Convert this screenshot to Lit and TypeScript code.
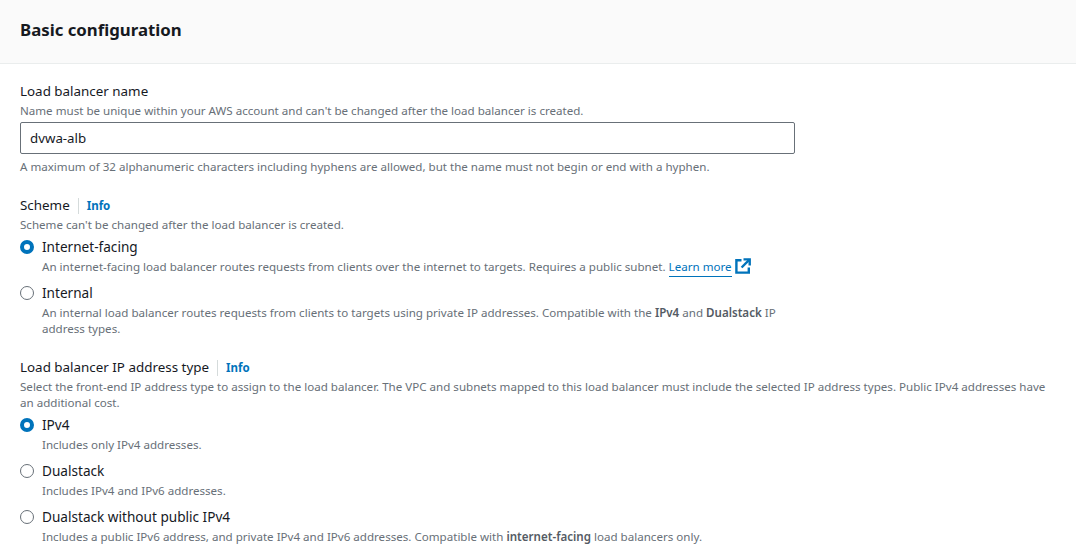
import { html, css, LitElement } from "lit";
import { customElement } from "lit/decorators.js";

interface Choice {
  label: string;
  checked?: boolean;
  desc: unknown;
}

const schemes: Choice[] = [
  {
    label: "Internet-facing",
    checked: true,
    desc: html`An internet-facing load balancer routes requests from clients over the internet to targets. Requires a public subnet.
      <a class="ext" href="#">Learn more</a>
      <svg class="ext-icon" viewBox="0 0 16 16" width="16" height="16" fill="none" stroke="#0073bb" stroke-width="2.4">
        <path d="M6.5 2.2H1.4v12.4h12.4V9.5" />
        <path d="M8.5 1.4h6.2v6.2" />
        <path d="M14.4 1.7 6.6 9.5" />
      </svg>`,
  },
  {
    label: "Internal",
    desc: html`An internal load balancer routes requests from clients to targets using private IP addresses. Compatible with the <b>IPv4</b> and <b>Dualstack</b> IP address types.`,
  },
];

const ipTypes: Choice[] = [
  { label: "IPv4", checked: true, desc: "Includes only IPv4 addresses." },
  { label: "Dualstack", desc: "Includes IPv4 and IPv6 addresses." },
  {
    label: "Dualstack without public IPv4",
    desc: html`Includes a public IPv6 address, and private IPv4 and IPv6 addresses. Compatible with <b>internet-facing</b> load balancers only.`,
  },
];

@customElement("app-root")
export class AppRoot extends LitElement {
  static styles = css`
    :host {
      display: block;
      height: 560px;
      overflow: hidden;
      background: #fff;
      color: #16191f;
      font-family: "Noto Sans", "Open Sans", sans-serif;
    }
    .head {
      height: 64px;
      box-sizing: border-box;
      padding: 18px 20px 0;
      background: #fafafa;
      border-bottom: 1px solid #eaeded;
      font-size: 16.8px;
      line-height: 24px;
      font-weight: 700;
    }
    .body {
      padding: 17px 26px 0 20px;
      display: flex;
      flex-direction: column;
      gap: 20px;
    }
    .field {
      display: flex;
      flex-direction: column;
    }
    .label {
      display: flex;
      align-items: center;
      font-size: 13.4px;
      line-height: 20px;
      height: 20px;
    }
    .info {
      margin-left: 8px;
      margin-top: 1px;
      padding-left: 8px;
      border-left: 1px solid #d5dbdb;
      color: #0073bb;
      font-size: 11.5px;
      font-weight: 700;
      height: 16px;
      line-height: 16px;
    }
    .desc {
      font-size: 11.58px;
      line-height: 16px;
      color: #687078;
      margin-top: 2px;
    }
    .name-input {
      width: 775px;
      height: 32px;
      box-sizing: border-box;
      margin-top: 3px;
      padding: 0 9px;
      border: 1px solid #687078;
      border-radius: 2px;
      font-size: 13.3px;
      line-height: 30px;
    }
    .hint {
      margin-top: 5px;
    }
    .choices {
      display: flex;
      flex-direction: column;
      gap: 8px;
      margin-top: 4px;
    }
    .choice {
      display: grid;
      grid-template-columns: 14px 1fr;
      column-gap: 8px;
      width: 775px;
    }
    .radio {
      width: 14px;
      height: 14px;
      box-sizing: border-box;
      border: 1px solid #687078;
      border-radius: 50%;
      align-self: center;
    }
    .radio.on {
      border: 4px solid #0073bb;
    }
    .choice .text {
      font-size: 13.6px;
      line-height: 20px;
    }
    .choice .desc {
      grid-column: 2;
    }
    b {
      font-weight: 600;
      color: #545b64;
    }
    .ext {
      color: #0073bb;
      text-decoration: none;
      border-bottom: 1px solid #0073bb;
      padding-bottom: 2px;
    }
    .ext-icon {
      display: inline-block;
      vertical-align: top;
      margin-top: -1px;
      margin-bottom: -2px;
    }
  `;

  private choice(c: Choice) {
    return html`<div class="choice">
      <span class="radio ${c.checked ? "on" : ""}"></span>
      <span class="text">${c.label}</span>
      <div class="desc">${c.desc}</div>
    </div>`;
  }

  render() {
    return html`
      <div class="head">Basic configuration</div>
      <div class="body">
        <div class="field">
          <div class="label">Load balancer name</div>
          <div class="desc">Name must be unique within your AWS account and can't be changed after the load balancer is created.</div>
          <div class="name-input">dvwa-alb</div>
          <div class="desc hint">A maximum of 32 alphanumeric characters including hyphens are allowed, but the name must not begin or end with a hyphen.</div>
        </div>
        <div class="field">
          <div class="label">Scheme<span class="info">Info</span></div>
          <div class="desc">Scheme can't be changed after the load balancer is created.</div>
          <div class="choices">${schemes.map((c) => this.choice(c))}</div>
        </div>
        <div class="field">
          <div class="label">Load balancer IP address type<span class="info">Info</span></div>
          <div class="desc">Select the front-end IP address type to assign to the load balancer. The VPC and subnets mapped to this load balancer must include the selected IP address types. Public IPv4 addresses have an additional cost.</div>
          <div class="choices">${ipTypes.map((c) => this.choice(c))}</div>
        </div>
      </div>
    `;
  }
}
